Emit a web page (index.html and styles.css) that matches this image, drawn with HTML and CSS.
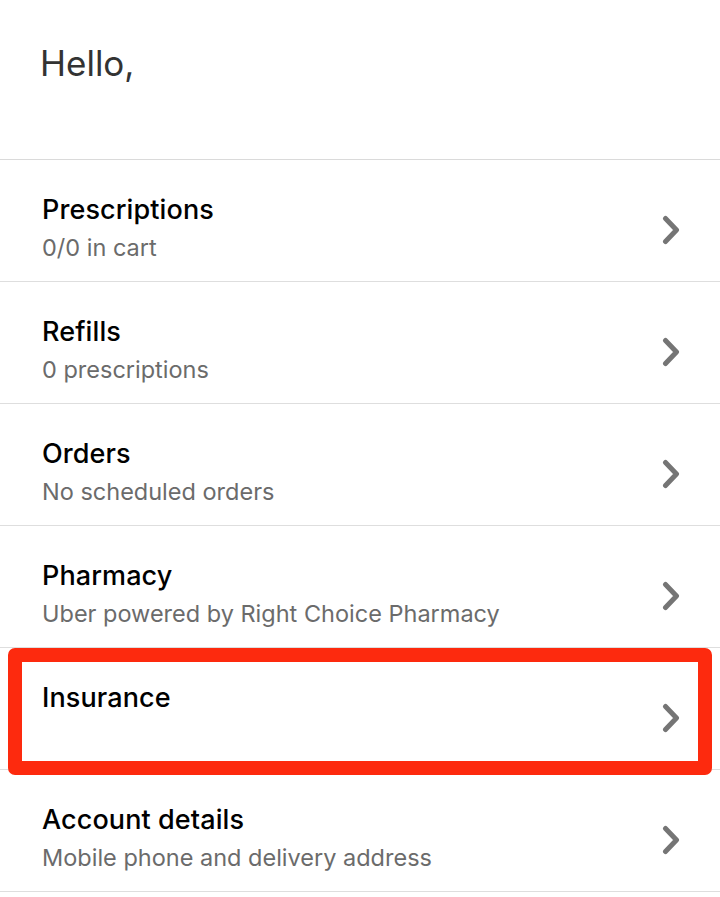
FILE: index.html
```html
<!DOCTYPE html>
<html lang="en">
<head>
    <meta charset="UTF-8">
    <meta name="viewport" content="width=device-width, initial-scale=1.0">
    <title>Account</title>
    <link rel="stylesheet" href="styles.css">
</head>
<body>
    <header class="greeting">
        <h1>Hello,</h1>
    </header>

    <ul class="menu">
        <li class="menu-row">
            <div class="menu-text">
                <div class="menu-title">Prescriptions</div>
                <div class="menu-sub">0/0 in cart</div>
            </div>
            <svg class="chevron" viewBox="0 0 18 30"><path d="M3.5 3.5l11 11.5-11 11.5"/></svg>
        </li>
        <li class="menu-row">
            <div class="menu-text">
                <div class="menu-title">Refills</div>
                <div class="menu-sub">0 prescriptions</div>
            </div>
            <svg class="chevron" viewBox="0 0 18 30"><path d="M3.5 3.5l11 11.5-11 11.5"/></svg>
        </li>
        <li class="menu-row">
            <div class="menu-text">
                <div class="menu-title">Orders</div>
                <div class="menu-sub">No scheduled orders</div>
            </div>
            <svg class="chevron" viewBox="0 0 18 30"><path d="M3.5 3.5l11 11.5-11 11.5"/></svg>
        </li>
        <li class="menu-row">
            <div class="menu-text">
                <div class="menu-title">Pharmacy</div>
                <div class="menu-sub">Uber powered by Right Choice Pharmacy</div>
            </div>
            <svg class="chevron" viewBox="0 0 18 30"><path d="M3.5 3.5l11 11.5-11 11.5"/></svg>
        </li>
        <li class="menu-row highlighted">
            <div class="menu-text">
                <div class="menu-title">Insurance</div>
                <div class="menu-sub">&nbsp;</div>
            </div>
            <svg class="chevron" viewBox="0 0 18 30"><path d="M3.5 3.5l11 11.5-11 11.5"/></svg>
        </li>
        <li class="menu-row">
            <div class="menu-text">
                <div class="menu-title">Account details</div>
                <div class="menu-sub">Mobile phone and delivery address</div>
            </div>
            <svg class="chevron" viewBox="0 0 18 30"><path d="M3.5 3.5l11 11.5-11 11.5"/></svg>
        </li>
    </ul>
</body>
</html>
```

FILE: styles.css
```css
body {
    font-family: Inter, "Noto Sans", sans-serif;
    margin: 0;
    padding: 0;
    background: #ffffff;
    color: #000;
    overflow: hidden;
}
.greeting {
    height: 160px;
    border-bottom: 1px solid #dadada;
    box-sizing: border-box;
    padding: 40px 0 0 40px;
}
.greeting h1 {
    margin: 0;
    font-size: 35px;
    font-weight: 400;
    color: #333;
    line-height: 46px;
}
.menu {
    list-style: none;
    margin: 0;
    padding: 0;
}
.menu-row {
    position: relative;
    height: 122px;
    box-sizing: border-box;
    border-bottom: 1px solid #dedede;
    display: flex;
    align-items: flex-start;
    justify-content: space-between;
    padding: 34px 40px 0 42px;
}
.menu-text {
    display: flex;
    flex-direction: column;
    gap: 7px;
}
.menu-title {
    font-size: 27px;
    font-weight: 500;
    line-height: 32px;
    letter-spacing: 0.1px;
}
.menu-sub {
    font-size: 23.5px;
    color: #6b6b6b;
    line-height: 30px;
}
.chevron {
    width: 18px;
    height: 30px;
    margin-top: 21px;
    fill: none;
    stroke: #757575;
    stroke-width: 5;
    stroke-linecap: round;
    stroke-linejoin: round;
}
.highlighted::after {
    content: "";
    position: absolute;
    top: 0;
    left: 8px;
    right: 8px;
    bottom: -6px;
    border: 14px solid #fd2a0e;
    border-radius: 7px;
}
```
